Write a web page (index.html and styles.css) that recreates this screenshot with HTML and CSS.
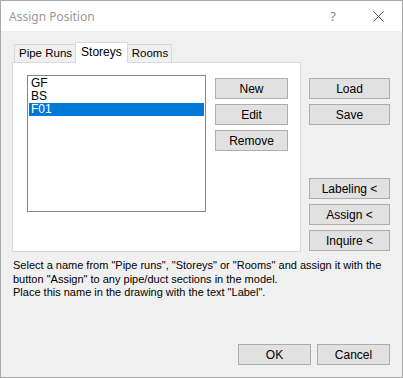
FILE: index.html
```html
<!DOCTYPE html>
<html lang="en">
<head>
    <meta charset="UTF-8">
    <title>Assign Position</title>
    <link rel="stylesheet" href="styles.css">
</head>
<body>

<div class="dialog">
    <!-- Title bar -->
    <div class="titlebar">
        <span class="title">Assign Position</span>
        <span class="tb-help">?</span>
        <span class="tb-close">
            <svg width="11" height="11" viewBox="0 0 11 11"><path d="M0.5 0.5 L10.5 10.5 M10.5 0.5 L0.5 10.5" stroke="#5a5a5a" stroke-width="1" fill="none"/></svg>
        </span>
    </div>

    <div class="content">
        <div class="main">
            <div class="left">
                <!-- Tabs -->
                <div class="tabs">
                    <div class="tab">Pipe Runs</div>
                    <div class="tab active">Storeys</div>
                    <div class="tab">Rooms</div>
                </div>
                <div class="panel">
                    <div class="listbox">
                        <div class="item">GF</div>
                        <div class="item">BS</div>
                        <div class="item selected">F01</div>
                    </div>
                    <div class="panel-buttons">
                        <button class="btn">New</button>
                        <button class="btn">Edit</button>
                        <button class="btn">Remove</button>
                    </div>
                </div>
            </div>

            <div class="right">
                <button class="btn wide">Load</button>
                <button class="btn wide">Save</button>
                <button class="btn wide spaced">Labeling &lt;</button>
                <button class="btn wide">Assign &lt;</button>
                <button class="btn wide">Inquire &lt;</button>
            </div>
        </div>

        <p class="hint">Select a name from "Pipe runs", "Storeys" or "Rooms" and assign it with the<br>button "Assign" to any pipe/duct sections in the model.<br>Place this name in the drawing with the text "Label".</p>

        <div class="footer">
            <button class="btn">OK</button>
            <button class="btn">Cancel</button>
        </div>
    </div>
</div>

</body>
</html>
```

FILE: styles.css
```css
body {
    margin: 0;
    font-family: "Liberation Sans", Arial, sans-serif;
    font-size: 11px;
    color: #000;
}
.dialog {
    width: 403px;
    height: 378px;
    box-sizing: border-box;
    border: 1px solid #a8a8a8;
    background: #f0f0f0;
    display: flex;
    flex-direction: column;
}
.titlebar {
    height: 30px;
    background: #fff;
    display: flex;
    align-items: center;
    flex-shrink: 0;
}
.title {
    margin-left: 8px;
    font-family: "Noto Sans", "Liberation Sans", sans-serif;
    font-size: 12px;
    color: #999;
    flex: 1;
}
.tb-help {
    font-family: "Noto Sans", sans-serif;
    font-size: 13px;
    color: #888;
    margin-right: 37px;
}
.tb-close {
    display: flex;
    margin-right: 18px;
}
.content {
    flex: 1;
    display: flex;
    flex-direction: column;
    padding: 11px 12px 12px 11px;
}
.main {
    display: flex;
}
.left {
    width: 290px;
}
.tabs {
    display: flex;
    height: 20px;
    margin-left: 2px;
    align-items: flex-end;
}
.tab {
    height: 18px;
    box-sizing: border-box;
    border: 1px solid #d9d9d9;
    border-bottom: none;
    padding: 0 3px 0 4px;
    line-height: 17px;
    font-size: 11.5px;
    background: #f0f0f0;
}
.tab.active {
    height: 21px;
    margin-bottom: -1px;
    background: #fff;
    line-height: 19px;
    padding: 0 5px;
    margin-left: -1px;
    margin-right: -1px;
    position: relative;
    z-index: 1;
    font-size: 12px;
}
.panel {
    height: 190px;
    box-sizing: border-box;
    border: 1px solid #d9d9d9;
    background: #fff;
    display: flex;
    padding: 12px 0 0 14px;
}
.listbox {
    width: 179px;
    height: 137px;
    box-sizing: border-box;
    border: 1px solid #828790;
    padding: 1px;
}
.item {
    height: 13px;
    line-height: 13px;
    padding-left: 2px;
    font-size: 12px;
}
.item.selected {
    background: #0078d7;
    color: #fff;
}
.panel-buttons {
    display: flex;
    flex-direction: column;
    gap: 5px;
    margin: 3px 0 0 9px;
}
.btn {
    width: 73px;
    height: 21px;
    box-sizing: border-box;
    border: 1px solid #adadad;
    background: #e1e1e1;
    font-family: "Liberation Sans", Arial, sans-serif;
    font-size: 12px;
    color: #000;
    padding: 0;
}
.right {
    display: flex;
    flex-direction: column;
    gap: 5px;
    margin-left: 8px;
    padding-top: 36px;
}
.btn.wide {
    width: 81px;
}
.btn.spaced {
    margin-top: 48px;
}
.hint {
    margin: 7px 0 0 1px;
    font-size: 11px;
    line-height: 13.5px;
    white-space: nowrap;
}
.footer {
    margin-top: auto;
    display: flex;
    justify-content: flex-end;
    gap: 6px;
}
```
